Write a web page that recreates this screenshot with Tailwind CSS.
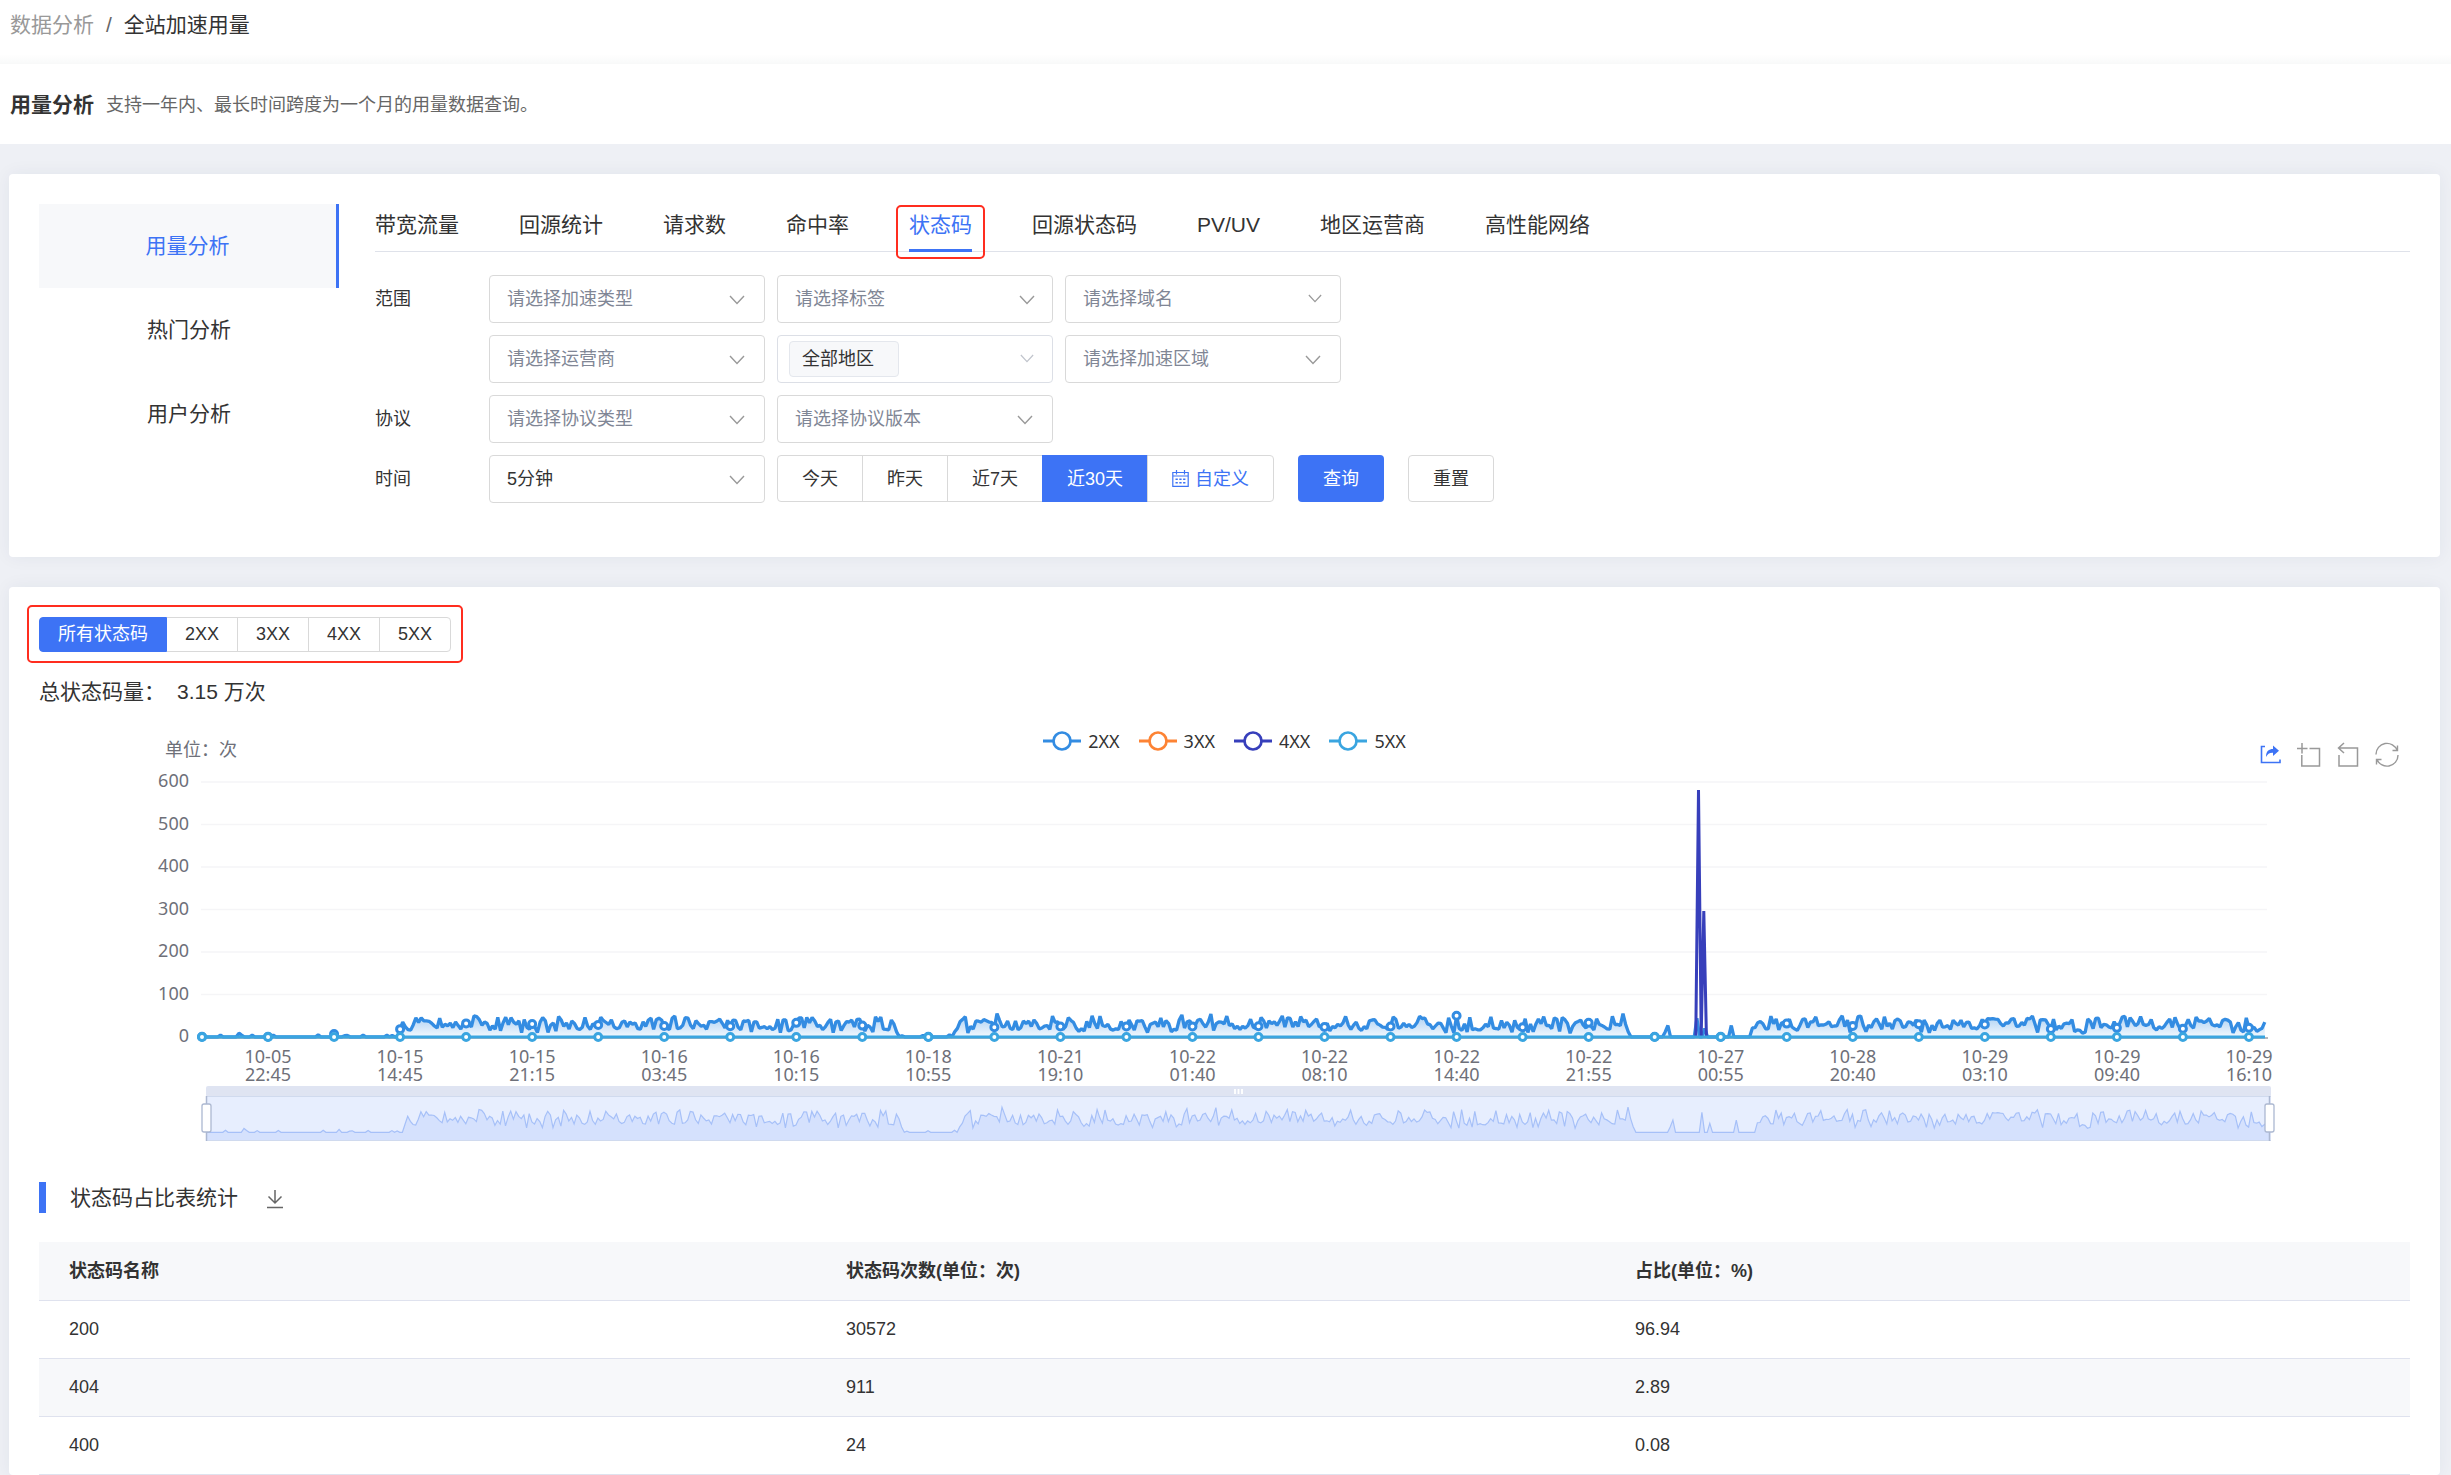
<!DOCTYPE html>
<html lang="zh-CN">
<head>
<meta charset="utf-8">
<title>全站加速用量</title>
<script src="https://cdn.jsdelivr.net/npm/@tailwindcss/browser@4"></script>
</head>
<body class="bg-[#eef0f5] font-['Liberation_Sans','Noto_Sans_CJK_SC',sans-serif] text-lg text-[#333] min-h-screen overflow-x-hidden">
<svg class="hidden">
  <symbol id="chev" viewBox="0 0 16 10"><path d="M1 1l7 7.500l7-7.500" fill="none" stroke="currentColor" stroke-width="1.400"/></symbol>
</svg>

<header class="bg-white">
  <nav aria-label="面包屑" class="flex h-16 items-start gap-3 bg-linear-to-b from-white from-85% to-[#f8f9f9] px-[10px] pt-[9px] text-[21px] leading-8">
    <a href="#" class="text-[#999]">数据分析</a><span class="text-[#666]">/</span><span>全站加速用量</span>
  </nav>
  <div class="flex h-20 items-center gap-3 bg-white px-[10px] pt-[2px]">
    <h1 class="text-[21px] font-bold leading-8">用量分析</h1>
    <p class="text-[#666]">支持一年内、最长时间跨度为一个月的用量数据查询。</p>
  </div>
</header>

<main class="flex flex-col gap-[30px] pt-[30px] pl-[9px] pr-[11px]">
  <section class="flex gap-9 rounded bg-white px-[30px] pt-[30px] pb-[54px] shadow-[0_0_18px_rgba(40,50,80,0.06)]">
    <nav aria-label="分析类型" class="flex w-[300px] shrink-0 flex-col text-center text-[21px] leading-[84px]">
      <a href="#" class="border-r-3 border-[#3d73f5] bg-[#f7f8fa] text-[#3d73f5]">用量分析</a>
      <a href="#">热门分析</a>
      <a href="#">用户分析</a>
    </nav>
    <div class="min-w-0 flex-1">
      <div role="tablist" class="flex h-12 items-start gap-[60px] border-b border-[#dfe2ea] text-[21px] leading-[42px] whitespace-nowrap">
        <button role="tab">带宽流量</button>
        <button role="tab">回源统计</button>
        <button role="tab">请求数</button>
        <button role="tab">命中率</button>
        <button role="tab" aria-selected="true" class="relative border-b-3 border-[#3d73f5] pb-[3px] text-[#3d73f5]">状态码<span class="absolute -inset-x-[13px] top-px -bottom-[10px] rounded-[5px] border-2 border-[#ff2d1f]"></span></button>
        <button role="tab">回源状态码</button>
        <button role="tab">PV/UV</button>
        <button role="tab">地区运营商</button>
        <button role="tab">高性能网络</button>
      </div>
      <form class="mt-[23px] flex flex-col gap-3 text-[#333]" onsubmit="return false">
        <div class="flex h-12 gap-3">
          <label for="f1" class="-mr-3 w-[114px] leading-[48px]">范围</label>
          <div class="relative w-[276px]"><select id="f1" class="h-12 w-full appearance-none rounded border border-[#d9d9d9] bg-white px-[17px] text-[#808695]"><option>请选择加速类型</option></select><svg class="pointer-events-none absolute top-5 right-5 h-[10px] w-4 text-[#999]"><use href="#chev"/></svg></div>
          <div class="relative w-[276px]"><select aria-label="标签" class="h-12 w-full appearance-none rounded border border-[#d9d9d9] bg-white px-[17px] text-[#808695]"><option>请选择标签</option></select><svg class="pointer-events-none absolute top-5 right-[18px] h-[10px] w-4 text-[#999]"><use href="#chev"/></svg></div>
          <div class="relative w-[276px]"><select aria-label="域名" class="h-12 w-full appearance-none rounded border border-[#d9d9d9] bg-white px-[17px] text-[#808695]"><option>请选择域名</option></select><svg class="pointer-events-none absolute top-[19px] right-[19px] h-[9px] w-[14px] text-[#999]"><use href="#chev"/></svg></div>
        </div>
        <div class="flex h-12 gap-3 pl-[102px]">
          <div class="relative ml-3 w-[276px]"><select aria-label="运营商" class="h-12 w-full appearance-none rounded border border-[#d9d9d9] bg-white px-[17px] text-[#808695]"><option>请选择运营商</option></select><svg class="pointer-events-none absolute top-5 right-5 h-[10px] w-4 text-[#999]"><use href="#chev"/></svg></div>
          <div class="relative flex w-[276px] items-center rounded border border-[#dcdfe6] bg-white pl-[11px]">
            <span class="w-[110px] shrink-0 rounded border border-[#e4e7ed] bg-[#f7f8fa] pl-3 leading-[34px]">全部地区</span>
            <input type="text" aria-label="地区" class="w-full min-w-0 outline-none">
            <svg class="pointer-events-none absolute top-[18px] right-[18px] h-[9px] w-[14px] text-[#c0c4cc]"><use href="#chev"/></svg>
          </div>
          <div class="relative w-[276px]"><select aria-label="加速区域" class="h-12 w-full appearance-none rounded border border-[#d9d9d9] bg-white px-[17px] text-[#808695]"><option>请选择加速区域</option></select><svg class="pointer-events-none absolute top-5 right-5 h-[10px] w-4 text-[#999]"><use href="#chev"/></svg></div>
        </div>
        <div class="flex h-12 gap-3">
          <label for="f2" class="-mr-3 w-[114px] leading-[48px]">协议</label>
          <div class="relative w-[276px]"><select id="f2" class="h-12 w-full appearance-none rounded border border-[#d9d9d9] bg-white px-[17px] text-[#808695]"><option>请选择协议类型</option></select><svg class="pointer-events-none absolute top-5 right-5 h-[10px] w-4 text-[#999]"><use href="#chev"/></svg></div>
          <div class="relative w-[276px]"><select aria-label="协议版本" class="h-12 w-full appearance-none rounded border border-[#d9d9d9] bg-white px-[17px] text-[#808695]"><option>请选择协议版本</option></select><svg class="pointer-events-none absolute top-5 right-5 h-[10px] w-4 text-[#999]"><use href="#chev"/></svg></div>
        </div>
        <div class="flex h-12 items-start gap-3">
          <label for="f3" class="-mr-3 w-[114px] leading-[48px]">时间</label>
          <div class="relative w-[276px]"><select id="f3" class="h-12 w-full appearance-none rounded border border-[#d9d9d9] bg-white px-[17px]"><option>5分钟</option></select><svg class="pointer-events-none absolute top-5 right-5 h-[10px] w-4 text-[#999]"><use href="#chev"/></svg></div>
          <div class="flex h-[47px] whitespace-nowrap">
            <button class="rounded-l border border-[#d9d9d9] px-6">今天</button>
            <button class="-ml-px border border-[#d9d9d9] px-6">昨天</button>
            <button class="-ml-px border border-[#d9d9d9] px-6">近7天</button>
            <button class="-ml-px border border-[#3d73f5] bg-[#3d73f5] px-6 text-white">近30天</button>
            <button class="-ml-px flex items-center gap-[6px] rounded-r border border-[#d9d9d9] px-6 text-[#3d73f5]"><svg class="h-[17px] w-[17px]" viewBox="0 0 17 17" fill="none" stroke="currentColor" stroke-width="1.200"><path d="M.8 2.500h15.400v13.800H.8zM.8 6h15.400M4.500 0v4.500M12.500 0v4.500"/><path d="M3.500 9.200h10M3.500 12.800h10" stroke-width="1.500" stroke-dasharray="2.300 1.500"/></svg>自定义</button>
          </div>
          <button type="submit" class="ml-3 h-[47px] rounded bg-[#3d73f5] px-[25px] text-white">查询</button>
          <button type="reset" class="ml-3 h-[47px] rounded border border-[#d9d9d9] px-6">重置</button>
        </div>
      </form>
    </div>
  </section>

  <section class="rounded bg-white px-[30px] pt-[30px] shadow-[0_0_18px_rgba(40,50,80,0.06)]">
    <div class="relative flex h-[35px] w-max leading-[31px]">
      <button class="rounded-l border border-[#3d73f5] bg-[#3d73f5] px-[18px] text-white">所有状态码</button>
      <button class="border border-l-0 border-[#d9d9d9] px-[18px]">2XX</button>
      <button class="-ml-px border border-[#d9d9d9] px-[18px]">3XX</button>
      <button class="-ml-px border border-[#d9d9d9] px-[18px]">4XX</button>
      <button class="-ml-px rounded-r border border-[#d9d9d9] px-[18px]">5XX</button>
      <span class="pointer-events-none absolute -inset-x-3 -top-3 -bottom-[11px] rounded-[5px] border-2 border-[#ff2d1f]"></span>
    </div>
    <p class="mt-6 flex gap-3 text-[21px] leading-8"><span>总状态码量：</span><span>3.15 万次</span></p>

    <div class="relative mt-3">
      <svg id="chart" class="block w-full" viewBox="39 720 2371 430" font-size="18" fill="#6e7079">
        <defs>
          <linearGradient id="area" x1="0" y1="1010" x2="0" y2="1037" gradientUnits="userSpaceOnUse"><stop offset="0" stop-color="#338ce2" stop-opacity=".5"/><stop offset="1" stop-color="#338ce2" stop-opacity=".06"/></linearGradient>
        </defs>
        <text x="165" y="756">单位：次</text>
        <g id="plot" class="font-['Noto_Sans',sans-serif]"></g>
      </svg>
      <div class="absolute inset-x-0 top-2 flex justify-center gap-[19px] font-['Noto_Sans',sans-serif] leading-[26px]">
        <button class="flex items-center gap-[7px] text-[#338ce2]"><svg class="h-5 w-[38px]" viewBox="0 0 38 20"><path d="M0 10h38" stroke="currentColor" stroke-width="3"/><circle cx="19" cy="10" r="8.500" fill="#fff" stroke="currentColor" stroke-width="2.700"/></svg><span class="text-[#333]">2XX</span></button>
        <button class="flex items-center gap-[7px] text-[#fd8334]"><svg class="h-5 w-[38px]" viewBox="0 0 38 20"><path d="M0 10h38" stroke="currentColor" stroke-width="3"/><circle cx="19" cy="10" r="8.500" fill="#fff" stroke="currentColor" stroke-width="2.700"/></svg><span class="text-[#333]">3XX</span></button>
        <button class="flex items-center gap-[7px] text-[#373fbb]"><svg class="h-5 w-[38px]" viewBox="0 0 38 20"><path d="M0 10h38" stroke="currentColor" stroke-width="3"/><circle cx="19" cy="10" r="8.500" fill="#fff" stroke="currentColor" stroke-width="2.700"/></svg><span class="text-[#333]">4XX</span></button>
        <button class="flex items-center gap-[7px] text-[#3aa5e0]"><svg class="h-5 w-[38px]" viewBox="0 0 38 20"><path d="M0 10h38" stroke="currentColor" stroke-width="3"/><circle cx="19" cy="10" r="8.500" fill="#fff" stroke="currentColor" stroke-width="2.700"/></svg><span class="text-[#333]">5XX</span></button>
      </div>
      <div class="absolute top-[22px] right-[11px] flex gap-[15px] text-[#999]">
        <button aria-label="导出" class="text-[#3d73f5]"><svg class="h-[26px] w-6" viewBox="0 0 24 26"><path d="M7 4.500H3.500v16h18.500v-3" fill="none" stroke="currentColor" stroke-width="1.600"/><path d="M8 15c0-6 3-8 7-8V3.500l6 5.200-6 5.200v-3.200c-3.500-.2-5.500 1.300-7 4.300z" fill="currentColor"/></svg></button>
        <button aria-label="区域缩放"><svg class="h-[26px] w-6" viewBox="0 0 24 26" fill="none" stroke="currentColor" stroke-width="1.500"><path d="M0 6.500h10.500M5 1v10.500M12.500 6.500h10v17.500H4.800V13"/></svg></button>
        <button aria-label="缩放还原"><svg class="h-[26px] w-6" viewBox="0 0 24 26" fill="none" stroke="currentColor" stroke-width="1.500"><path d="M8 1L2.500 6l5.500 5M2.500 6h19v18H3V13"/></svg></button>
        <button aria-label="刷新"><svg class="h-[26px] w-6" viewBox="0 0 24 26" fill="none" stroke="currentColor" stroke-width="1.400"><path d="M1 12.500A11 11 0 0 1 22.300 8.500M23 13A11 11 0 0 1 1.700 17M22.500 3.500v5h-5M1.500 22.500v-5h5"/></svg></button>
      </div>
    </div>

    <div class="mt-8 flex h-[31px] items-center">
      <span class="h-[31px] w-[7px] bg-[#3d73f5]"></span>
      <h2 class="ml-6 text-[21px] leading-8">状态码占比表统计</h2>
      <button aria-label="下载" class="ml-7 mt-1"><svg class="block h-[19px] w-[18px]" viewBox="0 0 18 19" fill="none" stroke="#666" stroke-width="1.500"><path d="M9 0v13M2.500 6.500L9 13l6.500-6.500M1 17.500h16"/></svg></button>
    </div>

    <table class="mt-[29px] w-full table-fixed border-collapse text-left">
      <colgroup><col class="w-[777px]"><col class="w-[789px]"><col></colgroup>
      <thead>
        <tr class="h-[58px] border-b border-[#dfe2ee] bg-[#f7f8fa]"><th class="pl-[30px] font-bold">状态码名称</th><th class="pl-[30px] font-bold">状态码次数(单位：次)</th><th class="pl-[30px] font-bold">占比(单位：%)</th></tr>
      </thead>
      <tbody>
        <tr class="h-[58px] border-b border-[#dfe2ee]"><td class="pl-[30px]">200</td><td class="pl-[30px]">30572</td><td class="pl-[30px]">96.94</td></tr>
        <tr class="h-[58px] border-b border-[#dfe2ee] bg-[#f7f8fa]"><td class="pl-[30px]">404</td><td class="pl-[30px]">911</td><td class="pl-[30px]">2.89</td></tr>
        <tr class="h-[58px] border-b border-[#dfe2ee]"><td class="pl-[30px]">400</td><td class="pl-[30px]">24</td><td class="pl-[30px]">0.08</td></tr>
      </tbody>
    </table>
  </section>
</main>

<script>
// Chart geometry: zero line, pixels per request, sample spacing.
const BASE = 1037, K = 0.425, X0 = 202, STEP = 66.03 / 25, N = 782;
let seed = 20231;
const rnd = () => (seed = (seed * 16807) % 2147483647) / 2147483647;
const peaks = [[239,9],[334,10],[439,44],[474,50],[998,55],[1100,49],[1181,52],[1211,54],[1302,48],[1456,50],[1612,49],[1623,55],[1665,12],[1668,27],[1698,44],[1704,20],[1731,27],[1772,49],[1843,50]];
const vals = [];
let w = 0;
for (let i = 0; i < N; i++) {
  const x = X0 + i * STEP;
  const busy = (x > 398 && x < 894) || (x > 960 && x < 1630) || x > 1752;
  let v;
  if (busy) {
    w = w * 0.25 + (rnd() - 0.5) * 24;
    v = 30 + w;
    const r = rnd();
    if (r < 0.12) v = 9 + rnd() * 10; else if (r < 0.25) v = 41 + rnd() * 9;
  } else {
    v = x < 1640 && rnd() < 0.12 ? 3 + rnd() * 2 : 0.5;
    if (x > 894 && x < 899) v = 12;
    if (x >= 954 && x <= 960) v = 10 + (x - 954) * 3;
  }
  if (i % 25 === 0) v = busy ? 18 + rnd() * 16 : 0.5;
  if (i === 50) v = 7;
  for (const [px, pv] of peaks) if (Math.abs(px - x) < STEP / 2 && i !== 50) v = pv;
  vals.push([x, v]);
}
const line = vals.map(([x, v]) => x.toFixed(1) + ' ' + (BASE - v * K).toFixed(1)).join('L');
const mini = vals.map(([x, v]) => (x + 5).toFixed(1) + ' ' + (1132.5 - v * 0.46).toFixed(1)).join('L');
let h = '';
for (let i = 0; i <= 6; i++) {
  const y = 1037 - i * 42.5;
  if (i) h += `<path d="M201 ${y}H2267" stroke="#f5f5f7" stroke-width="1.5"/>`;
  h += `<text x="189" y="${Math.round(y + 5)}" text-anchor="end">${i * 100}</text>`;
}
h += `<path d="M201 1038H2268" stroke="#6e7079"/>`;
h += `<path d="M${line}V${BASE}H202Z" fill="url(#area)"/><path d="M${line}" fill="none" stroke="#338ce2" stroke-width="3.3" stroke-linejoin="bevel"/>`;
for (let i = 0; i <= 31; i++) {
  const [x, v] = vals[i * 25];
  h += `<circle cx="${x}" cy="${BASE - v * K}" r="3.5" fill="#fff" stroke="#338ce2" stroke-width="3"/>`;
}
h += `<path d="M1695.800 1036L1698.500 790L1701.200 1036L1703.800 911L1706.400 1036" fill="none" stroke="#373fbb" stroke-width="3" stroke-linejoin="bevel"/>`;
h += `<path d="M202 1037H2265" stroke="#3aa5e0" stroke-width="3"/>`;
for (let i = 0; i <= 31; i++) h += `<circle cx="${X0 + i * 66.03}" cy="1037" r="3.5" fill="#fff" stroke="#3aa5e0" stroke-width="3"/>`;
const labels = ['10-05 22:45','10-15 14:45','10-15 21:15','10-16 03:45','10-16 10:15','10-18 10:55','10-21 19:10','10-22 01:40','10-22 08:10','10-22 14:40','10-22 21:55','10-27 00:55','10-28 20:40','10-29 03:10','10-29 09:40','10-29 16:10'];
labels.forEach((t, i) => {
  const [d, c] = t.split(' '), x = 268 + i * 132.07;
  h += `<text text-anchor="middle"><tspan x="${x}" y="1063">${d}</tspan><tspan x="${x}" y="1081">${c}</tspan></text>`;
});
// Range slider below the plot.
h += `<rect x="206" y="1086" width="2065" height="11" rx="2" fill="#dfe4f2"/><rect x="206" y="1097" width="2065" height="44" fill="#e7eefe"/>`;
h += `<path d="M${mini}V1141H206V1132Z" fill="#d5e1fd"/><path d="M${mini}" fill="none" stroke="#a6c0f8" stroke-width="1.200"/>`;
h += `<path d="M206 1096.500H2271M206 1140.500H2271" stroke="#d0daee"/><path d="M206.500 1096V1141M2269.500 1096V1141" stroke="#acb8d1" stroke-width="1.500"/>`;
h += `<path d="M1235 1089v5M1238.500 1089v5M1242 1089v5" stroke="#fff" stroke-width="1.800"/>`;
h += `<rect x="202" y="1104" width="9" height="28" rx="2" fill="#fff" stroke="#acb8d1" stroke-width="1.300"/><rect x="2265" y="1104" width="9" height="28" rx="2" fill="#fff" stroke="#acb8d1" stroke-width="1.300"/>`;
document.getElementById('plot').innerHTML = h;
</script>
</body>
</html>
